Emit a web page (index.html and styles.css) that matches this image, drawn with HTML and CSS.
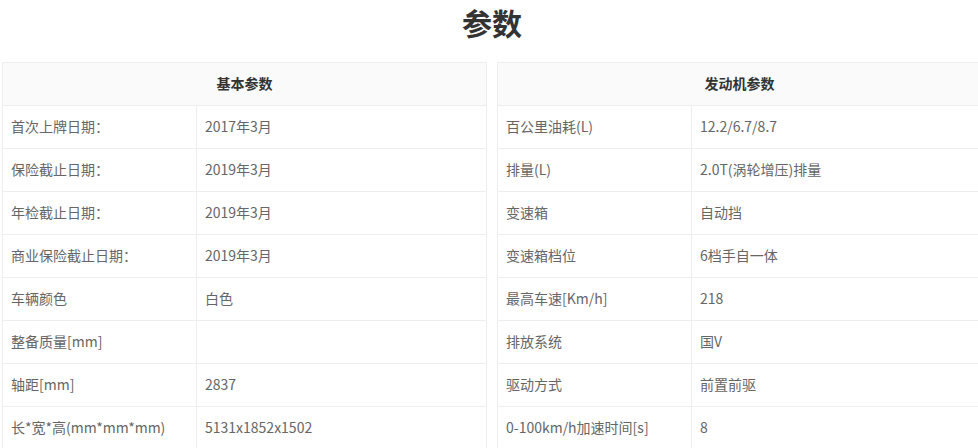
FILE: index.html
```html
<!DOCTYPE html>
<html lang="zh">
<head>
<meta charset="utf-8">
<title>参数</title>
<link rel="stylesheet" href="styles.css">
</head>
<body>
<div class="page">
  <h1 class="title">参数</h1>
  <div class="tables">
    <table class="params">
      <colgroup><col class="c-label"><col class="c-value"></colgroup>
      <thead><tr><th colspan="2">基本参数</th></tr></thead>
      <tbody>
        <tr><td>首次上牌日期：</td><td>2017年3月</td></tr>
        <tr><td>保险截止日期：</td><td>2019年3月</td></tr>
        <tr><td>年检截止日期：</td><td>2019年3月</td></tr>
        <tr><td>商业保险截止日期：</td><td>2019年3月</td></tr>
        <tr><td>车辆颜色</td><td>白色</td></tr>
        <tr><td>整备质量[mm]</td><td></td></tr>
        <tr><td>轴距[mm]</td><td>2837</td></tr>
        <tr><td>长*宽*高(mm*mm*mm)</td><td>5131x1852x1502</td></tr>
      </tbody>
    </table>
    <table class="params">
      <colgroup><col class="c-label"><col class="c-value"></colgroup>
      <thead><tr><th colspan="2">发动机参数</th></tr></thead>
      <tbody>
        <tr><td>百公里油耗(L)</td><td>12.2/6.7/8.7</td></tr>
        <tr><td>排量(L)</td><td>2.0T(涡轮增压)排量</td></tr>
        <tr><td>变速箱</td><td>自动挡</td></tr>
        <tr><td>变速箱档位</td><td>6档手自一体</td></tr>
        <tr><td>最高车速[Km/h]</td><td>218</td></tr>
        <tr><td>排放系统</td><td>国V</td></tr>
        <tr><td>驱动方式</td><td>前置前驱</td></tr>
        <tr><td>0-100km/h加速时间[s]</td><td>8</td></tr>
      </tbody>
    </table>
  </div>
</div>
</body>
</html>
```

FILE: styles.css
```css
html, body {
  margin: 0;
  padding: 0;
  overflow: hidden;
  background: #fff;
}
body {
  font-family: "Noto Sans CJK SC", "Noto Sans", "Liberation Sans", sans-serif;
  color: #666;
}
.page {
  width: 980px;
  padding-left: 2px;
}
.title {
  margin: 0 0 18px;
  height: 44px;
  line-height: 44px;
  font-size: 30px;
  font-weight: bold;
  color: #333;
  text-align: center;
}
.tables {
  display: grid;
  grid-template-columns: 485px 485px;
  column-gap: 10px;
  width: 980px;
  align-items: start;
}
.params {
  width: 485px;
  border-collapse: collapse;
  table-layout: fixed;
  font-size: 14px;
}
.c-label {
  width: 194px;
}
.params th,
.params td {
  border: 1px solid #eee;
  height: 40px;
  padding: 0 8px 2px;
  text-align: left;
  vertical-align: middle;
  line-height: 20px;
  white-space: nowrap;
}
.params th {
  background: #fafafa;
  color: #333;
  font-weight: bold;
  text-align: center;
}
.params td {
  color: #666;
}
```
